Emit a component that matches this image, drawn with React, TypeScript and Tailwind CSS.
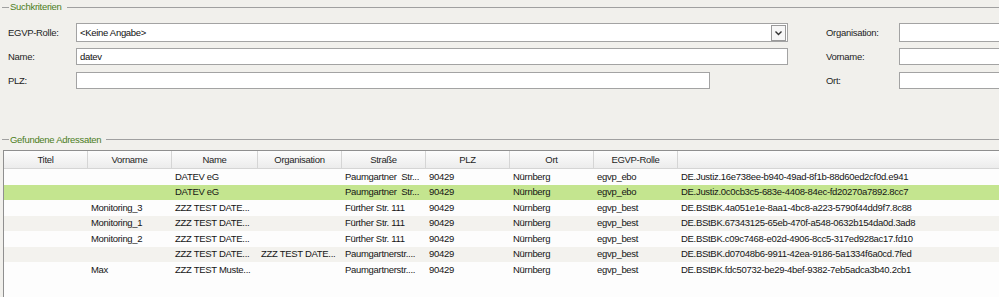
import React from 'react';

const cols = [
  { label: 'Titel', w: 'w-[84px]' },
  { label: 'Vorname', w: 'w-[84px]' },
  { label: 'Name', w: 'w-[86px]' },
  { label: 'Organisation', w: 'w-[84px]' },
  { label: 'Straße', w: 'w-[84px]' },
  { label: 'PLZ', w: 'w-[84px]' },
  { label: 'Ort', w: 'w-[84px]' },
  { label: 'EGVP-Rolle', w: 'w-[84px]' },
];

const rows = [
  ['', '', 'DATEV eG', '', 'Paumgartner  Str...', '90429', 'Nürnberg', 'egvp_ebo', 'DE.Justiz.16e738ee-b940-49ad-8f1b-88d60ed2cf0d.e941'],
  ['', '', 'DATEV eG', '', 'Paumgartner  Str...', '90429', 'Nürnberg', 'egvp_ebo', 'DE.Justiz.0c0cb3c5-683e-4408-84ec-fd20270a7892.8cc7'],
  ['', 'Monitoring_3', 'ZZZ TEST DATE...', '', 'Fürther Str. 111', '90429', 'Nürnberg', 'egvp_best', 'DE.BStBK.4a051e1e-8aa1-4bc8-a223-5790f44dd9f7.8c88'],
  ['', 'Monitoring_1', 'ZZZ TEST DATE...', '', 'Fürther Str. 111', '90429', 'Nürnberg', 'egvp_best', 'DE.BStBK.67343125-65eb-470f-a548-0632b154da0d.3ad8'],
  ['', 'Monitoring_2', 'ZZZ TEST DATE...', '', 'Fürther Str. 111', '90429', 'Nürnberg', 'egvp_best', 'DE.BStBK.c09c7468-e02d-4906-8cc5-317ed928ac17.fd10'],
  ['', '', 'ZZZ TEST DATE...', 'ZZZ TEST DATE...', 'Paumgartnerstr....', '90429', 'Nürnberg', 'egvp_best', 'DE.BStBK.d07048b6-9911-42ea-9186-5a1334f6a0cd.7fed'],
  ['', 'Max', 'ZZZ TEST Muste...', '', 'Paumgartnerstr....', '90429', 'Nürnberg', 'egvp_best', 'DE.BStBK.fdc50732-be29-4bef-9382-7eb5adca3b40.2cb1'],
];

// --- Legend line of a group box ---
const Legend: React.FC<{ title: string; className?: string }> = ({ title, className = '' }) => (
  <div className={`flex items-center h-[13px] ${className}`}>
    <div className="ml-[2px] w-[7px] h-px bg-[#a0a0a0]" />
    <span className="px-[1px] text-[#4b7d22] whitespace-nowrap">{title}</span>
    <div className="ml-[4px] flex-1 h-px bg-[#a0a0a0]" />
  </div>
);

const TextBox: React.FC<{ value?: string; className?: string }> = ({ value = '', className = '' }) => (
  <div className={`h-[17px] shrink-0 bg-white border border-[#a3a3a3] flex items-center pl-[3px] text-[#111] ${className}`}>{value}</div>
);

const Label: React.FC<{ text: string; className?: string }> = ({ text, className = '' }) => (
  <div className={`shrink-0 text-[#1e1e1e] whitespace-nowrap ${className}`}>{text}</div>
);

export default function App() {
  return (
    <div className="w-[999px] h-[297px] overflow-hidden bg-[#f1f0ec] font-['Liberation_Sans',Arial,sans-serif] text-[9.5px] tracking-[-0.3px] leading-none">
      <Legend title="Suchkriterien" className="pt-[1px]" />

      {/* form */}
      <div className="mt-[10px] flex flex-col">
        <div className="flex items-center h-[19px]">
          <div className="w-[826px] shrink-0 flex items-center">
            <Label text="EGVP-Rolle:" className="w-[76px] pl-[8px]" />
            <div className="w-[712px] shrink-0 h-[19px] bg-white border border-[#a3a3a3] flex items-center">
              <span className="pl-[3px] flex-1 text-[#111]">&lt;Keine Angabe&gt;</span>
              <div className="w-[15px] h-[16px] mr-[1px] border border-[#9a9a9a] bg-[#f7f7f7] flex items-center justify-center">
                <svg width="9" height="6" viewBox="0 0 9 6"><path d="M1.5 1.5 L4.5 4.5 L7.5 1.5" fill="none" stroke="#333" strokeWidth="1.4" /></svg>
              </div>
            </div>
          </div>
          <Label text="Organisation:" className="w-[73px]" />
          <TextBox className="w-[120px] h-[19px]" />
        </div>
        <div className="flex items-center mt-[6px]">
          <div className="w-[826px] shrink-0 flex items-center">
            <Label text="Name:" className="w-[76px] pl-[8px]" />
            <TextBox value="datev" className="w-[712px]" />
          </div>
          <Label text="Vorname:" className="w-[73px]" />
          <TextBox className="w-[120px]" />
        </div>
        <div className="flex items-center mt-[7px]">
          <div className="w-[826px] shrink-0 flex items-center">
            <Label text="PLZ:" className="w-[76px] pl-[8px]" />
            <TextBox className="w-[634px]" />
          </div>
          <Label text="Ort:" className="w-[73px]" />
          <TextBox className="w-[120px]" />
        </div>
      </div>

      <Legend title="Gefundene Adressaten" className="mt-[44px]" />

      {/* result grid */}
      <div className="mt-[4px] ml-[3px] h-[200px] bg-[#fdfdfd] border-l border-t border-[#8f8f8f]">
        <div className="flex h-[18px] bg-gradient-to-b from-[#fdfdfd] to-[#ececec] border-b border-[#d5d5d5]">
          {cols.map(c => (
            <div key={c.label} className={`${c.w} shrink-0 border-r border-[#d5d5d5] flex items-center justify-center text-[#1e1e1e]`}>{c.label}</div>
          ))}
          <div className="flex-1" />
        </div>
        {rows.map((r, i) => (
          <div key={i} className={`flex h-[15.5px] items-center ${i === 1 ? 'bg-[#c4e58f]' : i % 2 === 1 ? 'bg-[#f3f2ee]' : 'bg-[#fdfdfd]'}`}>
            {r.slice(0, 8).map((v, j) => (
              <div key={j} className={`${cols[j].w} shrink-0 pl-[3px] leading-[14px] whitespace-pre overflow-hidden text-[#151515]`}>{v}</div>
            ))}
            <div className="flex-1 pl-[3px] leading-[14px] whitespace-nowrap text-[#151515]">{r[8]}</div>
          </div>
        ))}
      </div>
    </div>
  );
}
